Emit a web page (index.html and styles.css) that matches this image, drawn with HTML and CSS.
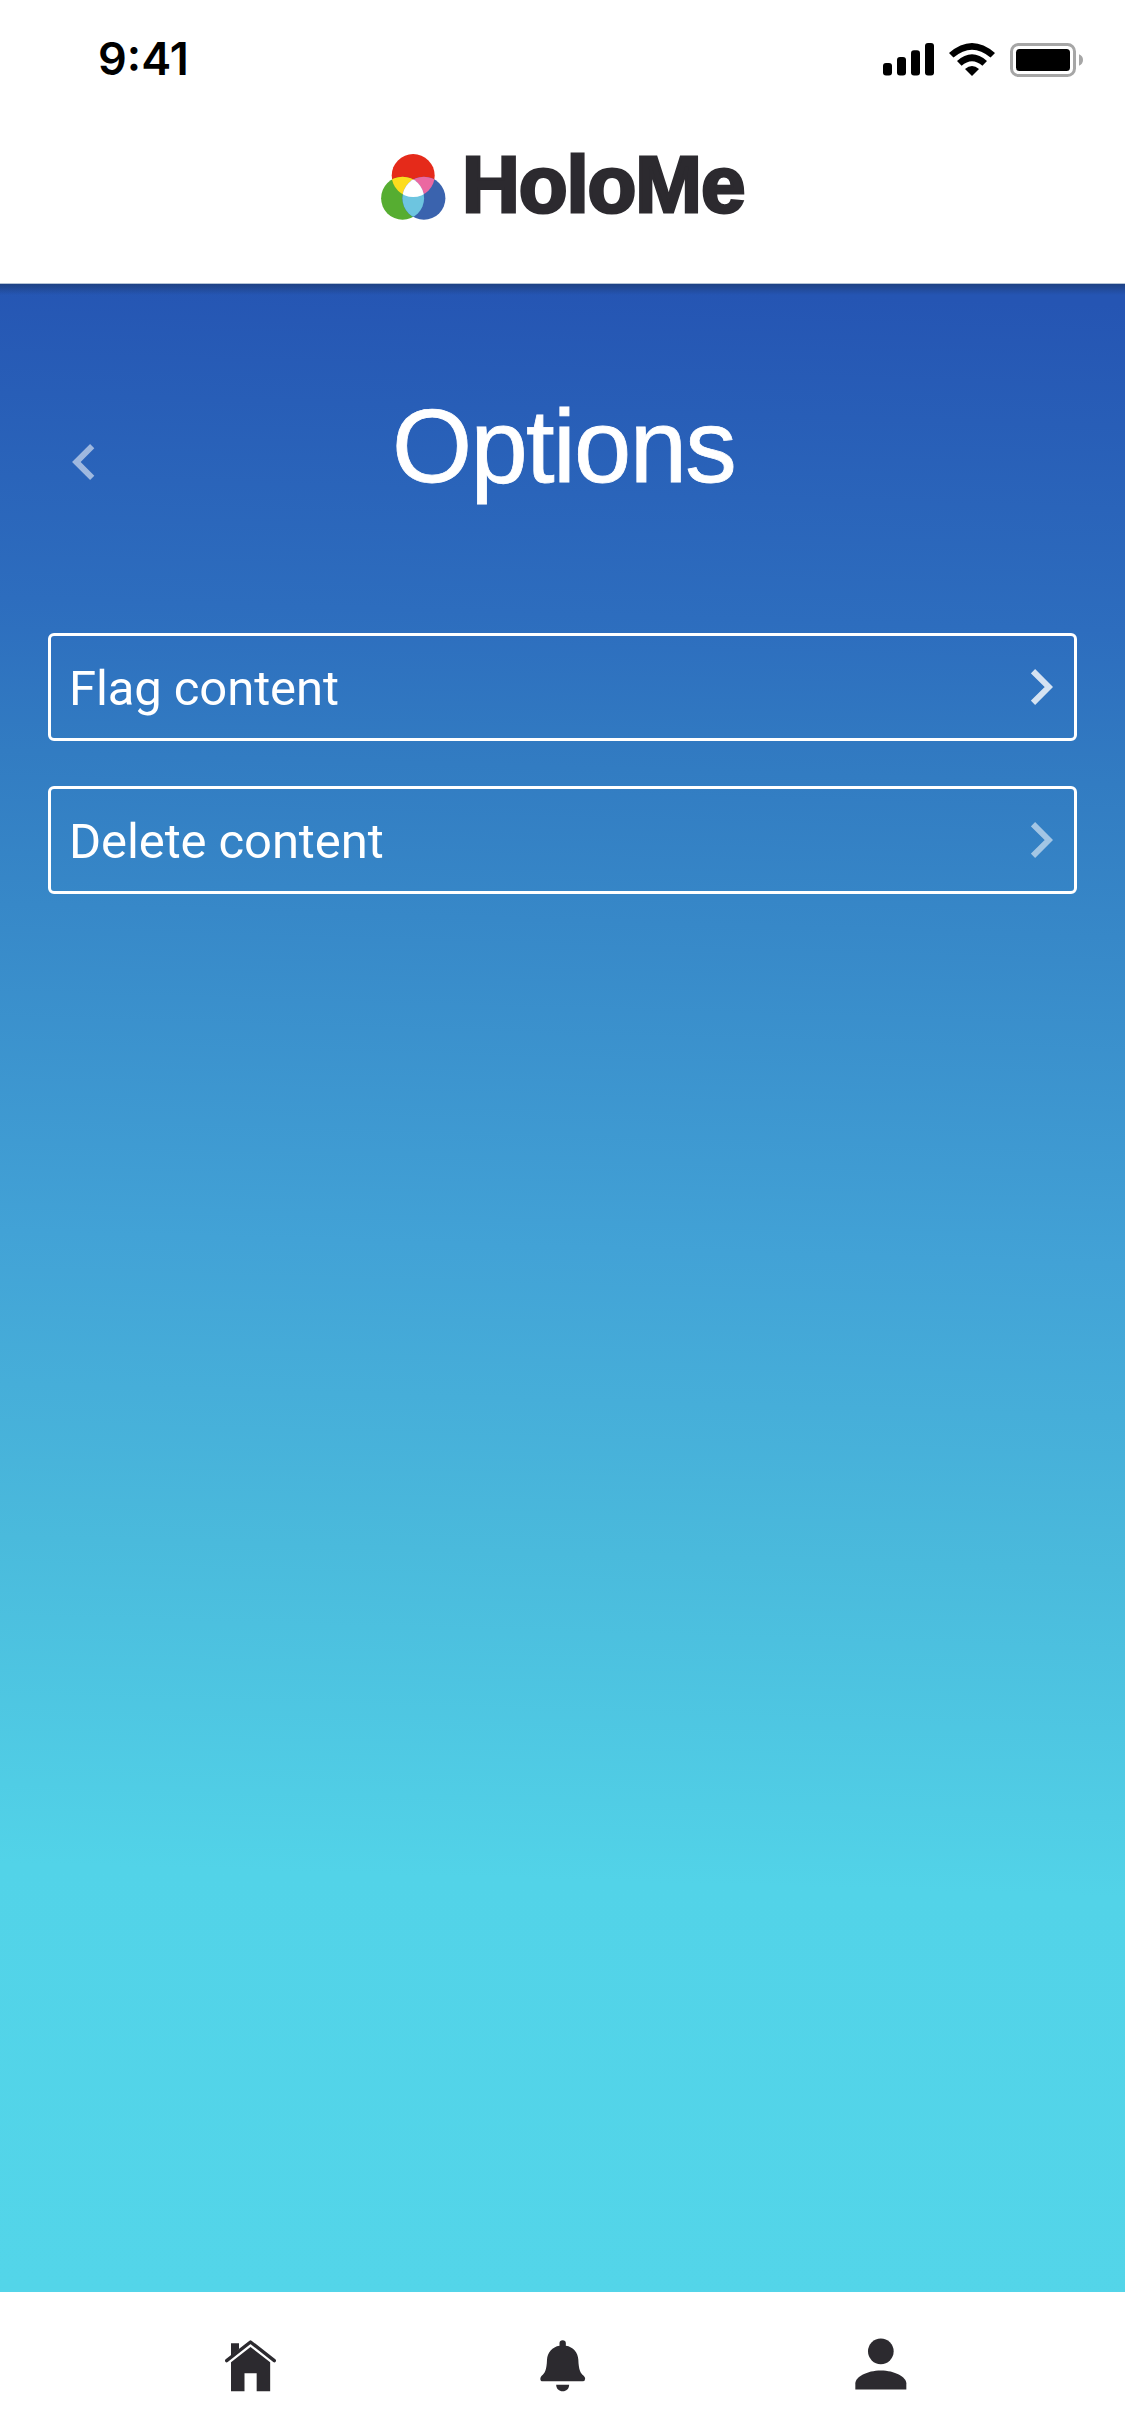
FILE: index.html
```html
<!DOCTYPE html>
<html lang="en">
<head>
<meta charset="utf-8">
<title>HoloMe – Options</title>
<link rel="stylesheet" href="styles.css">
</head>
<body>
<div class="app">
  <header class="header">
    <div class="status">
      <span class="time">9:41</span>
      <div class="status-icons">
        <svg class="signal" width="51" height="33" viewBox="0 0 51 33">
          <rect x="0" y="20" width="9" height="12.5" rx="3"/>
          <rect x="14" y="14" width="9" height="18.5" rx="3"/>
          <rect x="28" y="7.3" width="9" height="25.2" rx="3"/>
          <rect x="42" y="0" width="9" height="32.5" rx="3"/>
        </svg>
        <svg class="wifi" width="46" height="33" viewBox="0 0 46 33">
          <path d="M0 10 Q23 -10 46 10 L41.5 14.5 Q23 -1.2 4.5 14.5Z"/>
          <path d="M8 18 Q23 4.6 38 18 L33.4 22.7 Q23 13.6 12.6 22.7Z"/>
          <path d="M16 26 Q23 20 30 26 L23 33Z"/>
        </svg>
        <svg class="battery" width="73" height="34" viewBox="0 0 73 34">
          <rect x="1.5" y="1.5" width="63" height="31" rx="7" fill="none" stroke="#a6a6a6" stroke-width="3"/>
          <rect x="6" y="6" width="54" height="22" rx="3.5"/>
          <path d="M69 11.3 Q73 13 73 17 T69 22.8Z" fill="#a6a6a6"/>
        </svg>
      </div>
    </div>
    <div class="brand">
      <svg class="mark" width="65" height="67" viewBox="0 0 65 67">
        <defs>
          <clipPath id="red"><circle cx="32.2" cy="21.6" r="21.5"/></clipPath>
          <clipPath id="green"><circle cx="21.6" cy="44.2" r="21.5"/></clipPath>
        </defs>
        <circle cx="32.2" cy="21.6" r="21.5" fill="#e52a1a"/>
        <circle cx="21.6" cy="44.2" r="21.5" fill="#56ad31"/>
        <circle cx="42.9" cy="44.2" r="21.5" fill="#3a63ae"/>
        <circle cx="21.6" cy="44.2" r="21.5" fill="#fddc1d" clip-path="url(#red)"/>
        <circle cx="42.9" cy="44.2" r="21.5" fill="#eb68a1" clip-path="url(#red)"/>
        <circle cx="42.9" cy="44.2" r="21.5" fill="#6dc5e0" clip-path="url(#green)"/>
        <g clip-path="url(#green)"><circle cx="42.9" cy="44.2" r="21.5" fill="#fff" clip-path="url(#red)"/></g>
      </svg>
      <span class="wordmark">HoloMe</span>
    </div>
  </header>
  <main class="content">
    <div class="title-row">
      <svg class="back" width="23" height="36" viewBox="0 0 23 36"><path d="M20.2 2.2 L4.3 18 L20.2 33.8"/></svg>
      <h1 class="title">Options</h1>
    </div>
    <div class="options">
      <div class="option">
        <span>Flag content</span>
        <svg class="chevron" width="22" height="36" viewBox="0 0 22 36"><path d="M2 2.2 L17.8 18 L2 33.8"/></svg>
      </div>
      <div class="option">
        <span>Delete content</span>
        <svg class="chevron dim" width="22" height="36" viewBox="0 0 22 36"><path d="M2 2.2 L17.8 18 L2 33.8"/></svg>
      </div>
    </div>
  </main>
  <nav class="tabs">
    <svg class="home" width="51" height="52" viewBox="75 209 153 156">
      <path d="M80 271 L151.500 215 L223 271" fill="none" stroke="#2c2a2f" stroke-width="10" stroke-linecap="round" stroke-linejoin="round"/>
      <path d="M93 219H117V237L93 256Z"/>
      <path d="M93 276 L151.500 230 L210.500 276V363H170V309H133.500V363H93Z"/>
    </svg>
    <svg class="bell" width="46" height="52" viewBox="119 209 138 156">
      <path d="M177.500 226V218Q178 209.500 187 209.500T196.500 218V226C219 229 233 247 234 268C235 298 240 308 250 316Q254.500 320 254.500 325Q254 333 247 333H127Q120 333 120 325Q120 320 124 316C134 308 139 298 140 268C141 247 156 229 177.500 226Z"/>
      <path d="M167.500 343.500H206.500C206 356 198 363 187 363S168 356 167.500 343.500Z"/>
    </svg>
    <svg class="person" width="52" height="52" viewBox="104 203 156 156">
      <circle cx="181.500" cy="243" r="38.500"/>
      <path d="M105 357.500V339C105 320 140 300.500 181.500 300.500S258 320 258 339V357.500Z"/>
    </svg>
  </nav>
</div>
</body>
</html>
```
FILE: styles.css
```css
* { box-sizing: border-box; }
body { margin: 0; }
svg { display: block; flex: none; }

.app {
  width: 1125px;
  height: 2436px;
  display: flex;
  flex-direction: column;
  background: #fff;
}

.header { height: 284px; border-bottom: 1px solid #b4c3d6; }

.status {
  display: flex;
  justify-content: space-between;
  padding: 32px 42px 0 98px;
}
.time {
  font: 600 45px/54px Inter, "Liberation Sans", sans-serif;
  color: #000;
}
.status-icons { display: flex; align-items: flex-start; padding-top: 11px; }
.signal { margin-right: 15px; }
.wifi { margin-right: 15px; }

.brand {
  display: flex;
  align-items: flex-start;
  padding: 68px 0 0 381px;
}
.wordmark {
  margin: -17px 0 0 16px;
  font: 700 80px/96px "Liberation Sans", Arial, sans-serif;
  letter-spacing: -1.1px;
  color: #2c2a2f;
  -webkit-text-stroke: 3px #2c2a2f;
  white-space: nowrap;
}

.content {
  flex: 1;
  background:
    linear-gradient(rgba(25, 50, 95, .55), rgba(25, 50, 95, 0)) top / 100% 11px no-repeat,
    linear-gradient(181.7deg, #2555b3 0%, #2555b3 1%, #2d6dbe 17%, #327cc2 24.5%, #3788c8 32%, #42a2d6 48%, #4abadc 63%, #52d3e8 79%, #53d5e9 100%);
}
.title-row {
  display: flex;
  align-items: flex-start;
  padding-left: 72px;
  height: 349px;
}
.back { margin-top: 160px; opacity: .55; }
.title {
  margin: 103px 0 0 297px;
  font: 400 103px/120px "Liberation Sans", Arial, sans-serif;
  letter-spacing: -1.7px;
  color: #fff;
  -webkit-text-stroke: .8px #fff;
}
.back path, .chevron path { fill: none; stroke: #fff; stroke-width: 6; }

.options {
  display: grid;
  gap: 45px;
  padding: 0 48px;
}
.option {
  display: flex;
  align-items: center;
  justify-content: space-between;
  height: 108px;
  padding: 0 21px 0 18px;
  border: 3px solid #fff;
  border-radius: 6px;
  font: 400 49px/56px Roboto, sans-serif;
  letter-spacing: -.1px;
  color: #fff;
}
.option span { padding-top: 3px; }
.chevron { opacity: .8; }
.chevron.dim { opacity: .55; }

.tabs {
  display: flex;
  align-items: flex-start;
  height: 144px;
  padding: 48px 0 0 225px;
  fill: #2c2a2f;
}
.bell { margin-left: 264px; }
.person { margin: -2px 0 0 269px; }
```
